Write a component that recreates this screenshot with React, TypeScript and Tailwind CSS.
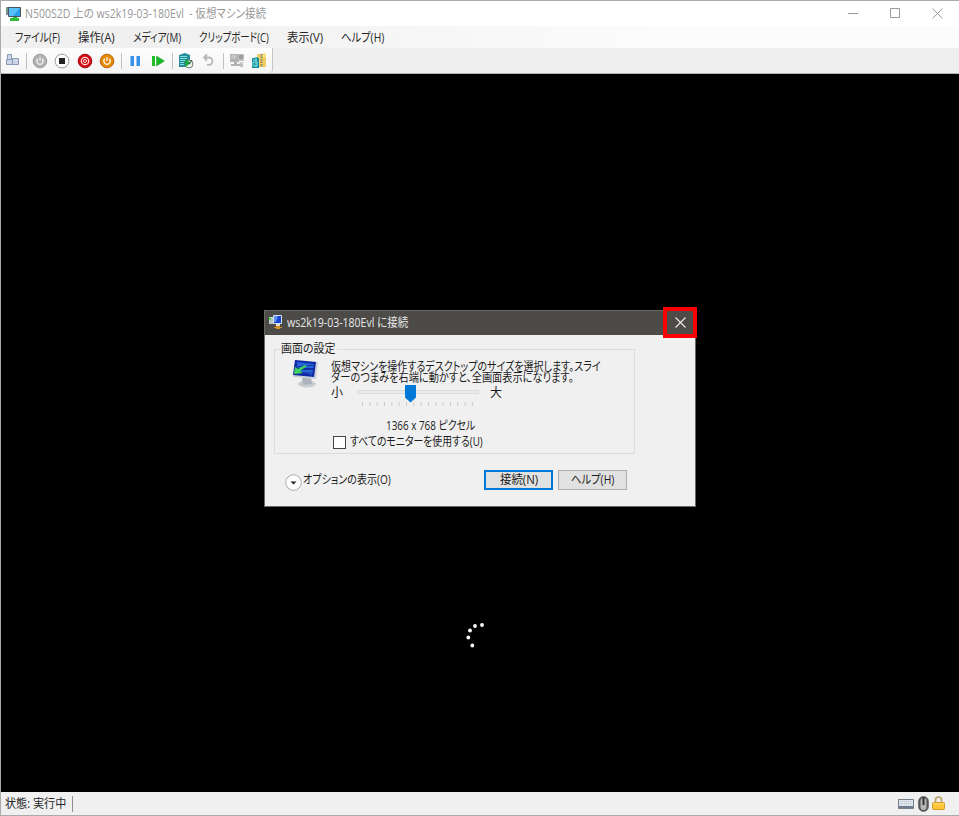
import { useLayoutEffect, useRef, useState } from "react";
import type { ReactNode } from "react";

type LabelProps = { text: string; w: number; className?: string; line?: string };

/* Single-line label condensed to the width of the narrow UI font. */
function Label({ text, w, className = "", line = "h-4 leading-4" }: LabelProps) {
  const ref = useRef<HTMLSpanElement>(null);
  const [scale, setScale] = useState(1);
  useLayoutEffect(() => {
    const measure = () => {
      if (ref.current) setScale(w / ref.current.offsetWidth);
    };
    measure();
    document.fonts.ready.then(measure);
  }, [w, text]);
  return (
    <span className={"block shrink-0 whitespace-pre " + line + " " + className} style={{ width: w }}>
      <span
        ref={ref}
        className="inline-block origin-left align-top [font-feature-settings:'palt']"
        style={{ transform: `scaleX(${scale})` }}
      >
        {text}
      </span>
    </span>
  );
}

function Icon({ children, size = 16, className = "" }: { children: ReactNode; size?: number; className?: string }) {
  return (
    <svg width={size} height={size} viewBox="0 0 16 16" fill="none" className={"block shrink-0 " + className}>
      {children}
    </svg>
  );
}

function Power({ fill, rim, glyph }: { fill: string; rim: string; glyph: string }) {
  return (
    <Icon>
      <circle cx="8" cy="8" r="6.8" fill={fill} stroke={rim} strokeWidth="1" />
      <path d="M5.8 5.8a3.1 3.1 0 1 0 4.4 0M8 4v4" stroke={glyph} strokeWidth="1.3" />
    </Icon>
  );
}

function Sep({ className = "bg-[#c2c2c2]" }: { className?: string }) {
  return <div className={"h-4 w-px shrink-0 " + className} />;
}

function TitleBar() {
  return (
    <header className="flex h-[25px] shrink-0 items-center bg-white pl-[3px]">
      <Icon className="mr-[4px] ml-px">
        <path d="M1 1h4v8H1z" fill="#818b90" />
        <path d="M1.5 3h1M1.5 5h1" stroke="#45db62" />
        <path d="M3.5 1.5h12v9h-12z" fill="#2b9ded" stroke="#46545f" />
        <path d="M4 2h11L8 10H4z" fill="#58c0f6" />
        <path d="M8 11h4v1h2v3H5v-3h3z" fill="#2fba39" />
      </Icon>
      <Label text="N500S2D 上の ws2k19-03-180Evl  - 仮想マシン接続" w={241} className="text-[12px] text-[#999]" />
      <div className="ml-auto flex items-center pr-[16px] text-[#999]">
        <svg width="10" height="11" className="mr-[32px]"><path d="M0 5.5h10" stroke="currentColor" /></svg>
        <svg width="11" height="11" fill="none" className="mr-[31px]"><path d="M.5.5h9v9h-9z" stroke="currentColor" /></svg>
        <svg width="11" height="11" fill="none"><path d="m.5.5 10 10m0-10-10 10" stroke="currentColor" /></svg>
      </div>
    </header>
  );
}

function MenuBar() {
  return (
    <nav className="flex h-[22px] shrink-0 items-center bg-linear-to-r from-[#f0f0f0] from-15% to-[#fcfcfc] to-70% pt-px pl-[14px] text-[12px] text-[#262626]">
      <Label text="ファイル(F)" w={45} className="mr-[18px]" />
      <Label text="操作(A)" w={37} className="mr-[18px]" />
      <Label text="メディア(M)" w={48} className="mr-[18px]" />
      <Label text="クリップボード(C)" w={70} className="mr-[18px]" />
      <Label text="表示(V)" w={36} className="mr-[18px]" />
      <Label text="ヘルプ(H)" w={43} />
    </nav>
  );
}

function ToolBar() {
  return (
    <div className="flex h-[26px] shrink-0 border-b border-[#b5b5b5] bg-[#efefef]">
      <div className="flex w-[272px] items-center rounded-br-sm border-r border-[#c6c6c6] bg-linear-to-b from-[#fdfdfd] to-[#f5f5f5] pl-1">
        <Icon className="mr-[5px]">
          <path d="M2.5 1.5h4v5h-4zM1.5 6.5h6v5h-6zM7.5 5.5h6v6h-6z" fill="#cbd7e8" stroke="#8799b7" />
        </Icon>
        <Sep className="mr-[4.5px] bg-[#c2c2c2]" />
        <div className="flex gap-[6.5px]">
          <Power fill="#b1b1b1" rim="#9b9b9b" glyph="#eee" />
          <Icon>
            <circle cx="8" cy="8" r="6.9" fill="#fff" stroke="#999" />
            <path d="M5 5h6v6H5z" fill="#222" />
          </Icon>
          <Icon>
            <circle cx="8" cy="8" r="6.8" fill="#d30b13" stroke="#a30a0d" />
            <circle cx="8" cy="8" r="3.7" stroke="#ffdede" strokeWidth="1.2" />
            <circle cx="8" cy="8" r="1.5" stroke="#ffdede" />
          </Icon>
          <Power fill="#e58909" rim="#b96806" glyph="#fff5de" />
        </div>
        <Sep className="mr-[6px] ml-[6px] bg-[#c2c2c2]" />
        <Icon><path d="M2.5 3H6v10H2.5zM8.5 3H12v10H8.5z" fill="#3592e8" /></Icon>
        <Icon className="ml-[7px]">
          <path d="M1 3h3v10H1z" fill="#24bd28" />
          <path d="M5.5 3v10l8-5z" fill="#16b626" stroke="#20a42a" strokeWidth=".5" />
        </Icon>
        <Sep className="mr-[5px] ml-[5px] bg-[#c2c2c2]" />
        <Icon>
          <path d="M1 2 7 0l5 2v12H1z" fill="#238b9a" />
          <path d="M2 3.5h7M2 5.5h7M2 7.5h5M2 9.5h4M2 11.5h4" stroke="#80dfdf" />
          <circle cx="11" cy="11" r="4" fill="#e8eeea" stroke="#717d78" />
          <path d="M7 6v8l6-4z" fill="#1ca83f" />
          <path d="m11 11 3-4" stroke="#284f34" />
        </Icon>
        <Icon className="ml-[7px]">
          <path d="M3 4.5h4.8a3.7 3.7 0 0 1 0 7.4H6M6 1.5l-3 3 3 3" stroke="#b7b7b7" strokeWidth="1.8" />
        </Icon>
        <Sep className="mr-[5px] ml-[6px] bg-[#c2c2c2]" />
        <Icon>
          <path d="M1 1h9v8H1zM5 9h3v3H5zM2 11h9v2H2z" fill="#b2b2b2" />
          <path d="M9 1h6v7H9zM11 9h3v5h-3z" fill="#bebebe" />
          <circle cx="12" cy="4" r="2.3" fill="#9d9d9d" />
          <path d="M2 3h6M2 5h5M9 10h5" stroke="#dadada" />
        </Icon>
        <Icon className="ml-[6px]">
          <path d="M6 1h9v13H7z" fill="#f1ce61" />
          <path d="M12 0h3v4h-3z" fill="#f8e58e" />
          <path d="M10.5 1v13" stroke="#8a846e" strokeWidth="2" strokeDasharray="1.5 1" />
          <path d="M1 5.5 6 4l2 1.5V15H1z" fill="#168d9c" />
          <path d="M2 7h4M2 9h4v4H2zM5 5v9" stroke="#79e0df" />
        </Icon>
      </div>
    </div>
  );
}

const ticks = Array.from({ length: 16 }, (_, i) => 5.5 + i * 7.33);

function ConnectDialog() {
  return (
    <section className="absolute top-[309px] left-[263px] flex h-[197px] w-[432px] flex-col border border-[#686865] bg-[#f0f0f0] text-[12px] text-[#1c1c1c]">
      <header className="flex h-[24px] shrink-0 items-center bg-[#4d4b48] pl-[3px] text-[#e7e7e7]">
        <Icon className="mr-[3px]">
          <path d="M1 2h4v7H1z" fill="#bbc6c8" /><path d="M1 4h2" stroke="#4ada44" strokeWidth="2" />
          <path d="M5.5.5h8v8h-8z" fill="#1743d0" stroke="#d6e2f0" />
          <path d="m6 1 4 0-2 6H6z" fill="#5e91f1" />
          <path d="M8 9h4v2H8z" fill="#ddd" /><path d="M6 12.5h8" stroke="#d49225" /><path d="M8 11h4v3H8z" fill="#d49225" />
        </Icon>
        <Label text="ws2k19-03-180Evl に接続" w={121} />
      </header>
      <div className="flex flex-1 flex-col pt-[6px] pl-[9px]">
        <fieldset className="flex h-[113px] w-[361px] flex-col border border-[#dcdcdc] px-[5px]">
          <legend className="px-px"><Label text="画面の設定" w={55} /></legend>
          <div className="flex">
            <svg width="29" height="31" viewBox="0 0 29 31" fill="none" className="mt-[2px] mr-[11px] ml-[11px] shrink-0">
              <ellipse cx="16" cy="25" rx="9" ry="3.5" fill="#c8cdd2" />
              <path d="m11 19 9-1 1 7-9 1z" fill="#aeb4bb" />
              <path d="m4 1 23 2-2 17L2 18z" fill="#cbd1d8" />
              <path d="m4 1 21 2-2 15-21-2z" fill="#102aa5" />
              <path d="m6 3 17 2-1 4-16 0zM5 11l17 0-1 5z" fill="#2667de" />
              <path d="m4 8 19-2M4 11l18-1M4 14l18 0" stroke="#153797" />
              <path d="m3 15 1-7 3 2 7-4 2 1-7 5 3 2z" fill="#40d65a" />
            </svg>
            <div className="pt-[4px]">
              <Label text="仮想マシンを操作するデスクトップのサイズを選択します。スライ" w={270} line="h-[11px] leading-[11px]" />
              <Label text="ダーのつまみを右端に動かすと、全画面表示になります。" w={243} line="h-[11px] leading-[11px]" className="mb-[2px]" />
              <div className="flex items-start">
                <Label text="小" w={12} className="mr-[14px]" />
                <svg width="123" height="24" className="mr-[10px] -mb-2">
                  <path d="M.5 5.5h121v3H.5z" fill="#e7eaea" stroke="#d9dcdc" />
                  {ticks.map((x) => <path key={x} d={`M${x} 17v4`} stroke="#ccc" />)}
                  <path d="M48 0h11v12.5l-5.5 5L48 12.5z" fill="#0078d7" />
                </svg>
                <Label text="大" w={12} />
              </div>
            </div>
          </div>
          <Label text="1366 x 768 ピクセル" w={89} className="mt-[17px] ml-[106px]" />
          <div className="ml-[53px] flex items-center">
            <span className="mr-[4px] block size-[13px] border border-[#444] bg-white" />
            <Label text="すべてのモニターを使用する(U)" w={133} />
          </div>
        </fieldset>
        <div className="mt-[16px] flex items-start pl-[11px]">
          <svg width="17" height="17" className="mt-[4px] shrink-0">
            <circle cx="8.5" cy="8.5" r="7.8" fill="#fff" stroke="#aaa" />
            <path d="M5.5 7.5h6l-3 3z" fill="#222" />
          </svg>
          <Label text="オプションの表示(O)" w={88} className="mt-[2px] ml-px" />
          <button className="ml-[93px] flex h-[20px] w-[69px] items-center justify-center border-2 border-[#0078d7] bg-[#e1e1e1]">
            <Label text="接続(N)" w={38} />
          </button>
          <button className="ml-[5px] flex h-[20px] w-[69px] items-center justify-center border border-[#adadad] bg-[#e1e1e1]">
            <Label text="ヘルプ(H)" w={43} />
          </button>
        </div>
      </div>
    </section>
  );
}

export default function App() {
  return (
    <main className="relative flex h-[816px] w-[959px] flex-col overflow-hidden border-t border-b border-l border-[#aaa] bg-white font-['Open_Sans','Noto_Sans_CJK_JP',sans-serif]">
      <TitleBar />
      <MenuBar />
      <ToolBar />
      <div className="flex-1 bg-black" />
      <footer className="flex h-[23px] shrink-0 items-center bg-[#f0f0f0] pl-1 text-[12px] text-[#262626]">
        <Label text="状態: 実行中" w={61} className="mr-[6px]" />
        <Sep className="bg-[#8f8f8f]" />
        <div className="ml-auto flex items-center pr-[14px]">
          <svg width="16" height="12" className="mr-[4px]">
            <path d="M.5 1.5h15v9H.5z" fill="#6e7d8d" stroke="#75818a" />
            <path d="M1 2h14v6H1z" fill="#dce3e9" />
            <path d="M2 3.5h12M2 5.5h12" stroke="#bcc8d2" strokeDasharray="1 1" />
          </svg>
          <svg width="11" height="16" className="mr-[3px]">
            <rect x=".5" y=".5" width="10" height="15" rx="5" fill="#555" stroke="#777" />
            <rect x="2.5" y="2" width="6" height="12" rx="3" fill="#b7b7b7" />
            <path d="M5.5 1v8" stroke="#333" strokeWidth="2" />
          </svg>
          <svg width="13" height="15" fill="none">
            <path d="M3.5 8V4a3 3 0 0 1 6 0v4" stroke="#bba467" strokeWidth="1.7" />
            <rect x=".5" y="6.5" width="12" height="7" rx="1" fill="#ffc438" stroke="#d59d27" />
            <path d="M1 8h11" stroke="#ffe27b" />
          </svg>
        </div>
      </footer>
      <ConnectDialog />
      <div className="absolute top-[306px] left-[662px] flex h-[31px] w-[34px] items-center justify-center border-4 border-[#f00] bg-[#4d4b48]">
        <svg width="11" height="11" fill="none"><path d="m.5.5 10 10m0-10-10 10" stroke="#e8e8e8" strokeWidth="1.2" /></svg>
      </div>
      <svg width="22" height="28" fill="white" className="absolute top-[620px] left-[464px]">
        <circle cx="10" cy="5" r="1.9" /><circle cx="17" cy="4" r="1.9" />
        <circle cx="5" cy="9.5" r="1.9" /><circle cx="3.3" cy="16.5" r="1.9" /><circle cx="7.3" cy="24.5" r="1.9" />
      </svg>
    </main>
  );
}
